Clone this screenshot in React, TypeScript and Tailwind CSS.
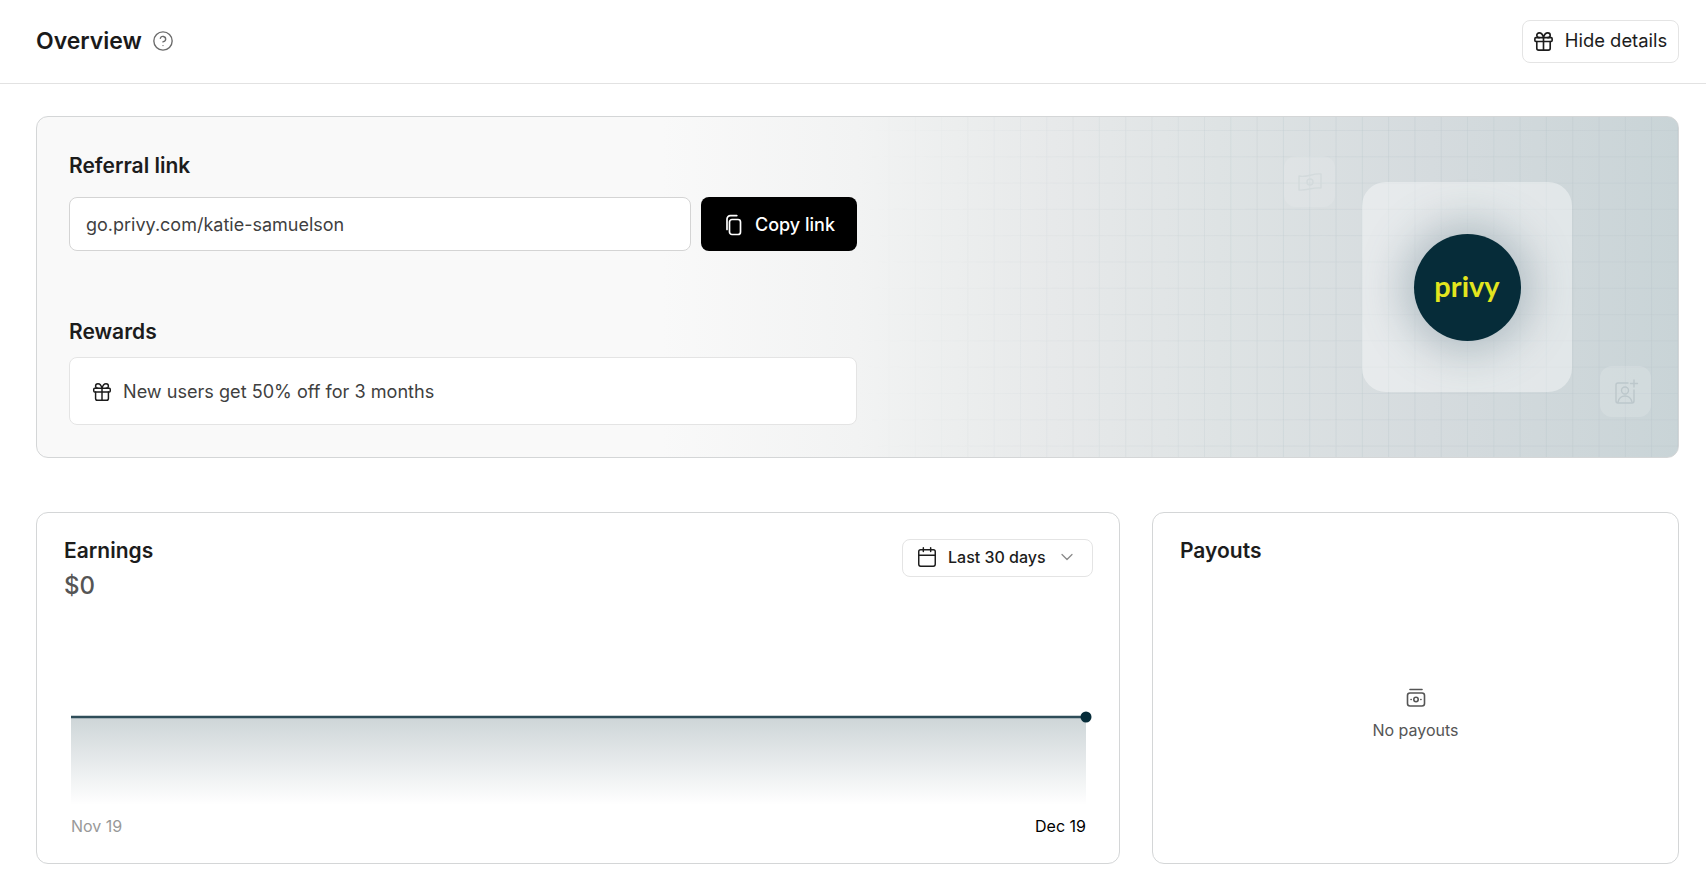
import { Calendar, ChevronDown, CircleHelp, Gift } from 'lucide-react'

function CopyIcon() {
  return (
    <svg width="22" height="22" viewBox="0 0 22 22" fill="none" stroke="currentColor" strokeWidth="1.7" strokeLinecap="round" strokeLinejoin="round">
      <rect x="6.5" y="5.5" width="11" height="15" rx="2.5" />
      <path d="M4 15.5V5a3.4 3.4 0 0 1 3.4-3.4h6.4" />
    </svg>
  )
}

function CashIcon() {
  return (
    <svg width="22" height="22" viewBox="0 0 22 22" fill="none" stroke="currentColor" strokeWidth="1.6" strokeLinecap="round">
      <path d="M5 2.5h12" />
      <rect x="2.5" y="6" width="17" height="13" rx="2.5" />
      <circle cx="11" cy="12.5" r="2.2" />
      <path d="M6 12.5h.2M15.8 12.5h.2" />
    </svg>
  )
}

function FlagCashIcon() {
  return (
    <svg width="26" height="22" viewBox="0 0 26 22" fill="none" stroke="currentColor" strokeWidth="1.4" strokeLinejoin="round">
      <path d="M2 5c7 2 14-3 22-2v14c-8-1-15 3-22 2z" />
      <circle cx="13" cy="11" r="3" />
    </svg>
  )
}

function AddUserIcon() {
  return (
    <svg width="26" height="26" viewBox="0 0 26 26" fill="none" stroke="currentColor" strokeWidth="1.4" strokeLinecap="round">
      <path d="M15 4H5a2 2 0 0 0-2 2v16a2 2 0 0 0 2 2h14a2 2 0 0 0 2-2V11" />
      <circle cx="12" cy="11.5" r="3.5" />
      <path d="M5 23c1-4 4-6 7-6s6 2 7 6M21 1v7M17.5 4.5h7" />
    </svg>
  )
}

function Banner() {
  return (
    <section className="relative h-[342px] overflow-hidden rounded-xl border border-[#d4d6d7] bg-[linear-gradient(90deg,#f9f9f9_0%,#f9f9f9_38%,#f2f3f3_50%,#eceeee_56%,#e7e9ea_62%,#dee3e4_72%,#d5dbde_85%,#c9d4d7_100%)] px-8 pt-[32px]">
      <div className="absolute inset-0 bg-[linear-gradient(#b9c6cb44_1px,transparent_1px),linear-gradient(90deg,#b9c6cb55_1px,transparent_1px)] bg-[size:26.3px_26.3px] bg-[position:10px_13px] [mask-image:linear-gradient(90deg,transparent_50%,black_80%)]" />

      <div className="relative flex w-[788px] flex-col">
        <h2 className="text-[21px] leading-[34px] font-semibold text-[#1c1c1c]">Referral link</h2>
        <div className="mt-[14px] flex gap-[10px]">
          <div className="flex h-[54px] flex-1 items-center rounded-lg border border-[#d4d4d4] bg-white pt-[2px] pl-4 text-lg text-[#3f3f3f]">
            go.privy.com/katie-samuelson
          </div>
          <button className="flex h-[54px] w-[156px] items-center justify-center gap-[10px] rounded-lg bg-black pt-[1px] text-lg font-medium text-white">
            <CopyIcon />
            Copy link
          </button>
        </div>
        <h2 className="mt-[64px] text-[21px] leading-[34px] font-semibold text-[#1c1c1c]">Rewards</h2>
        <div className="mt-[8px] flex h-[68px] items-center gap-[10px] rounded-lg border border-[#e4e4e4] bg-white pt-[1px] pl-[21px] text-[18.1px] text-[#3f3f3f]">
          <Gift size={22} strokeWidth={1.6} className="text-[#1c1c1c]" />
          New users get 50% off for 3 months
        </div>
      </div>

      {/* floating tiles */}
      <div className="absolute top-[39px] left-[1247px] flex h-[51px] w-[51px] items-center justify-center rounded-xl bg-white/10 text-[#d3dadc]">
        <FlagCashIcon />
      </div>
      <div className="absolute top-[249px] left-[1563px] flex h-[51px] w-[51px] items-center justify-center rounded-xl bg-white/15 text-[#bcc7cb]">
        <AddUserIcon />
      </div>
      <div className="absolute top-[65px] left-[1325px] flex h-[210px] w-[210px] items-center justify-center rounded-[24px] bg-white/40">
        <div className="flex h-[107px] w-[107px] items-center justify-center rounded-full bg-[#062c39] pb-[3px] shadow-[0_0_40px_12px_rgba(90,115,130,0.35)]">
          <span className="font-['Lato',sans-serif] text-[29px] leading-none font-bold text-[#e3e51e]">privy</span>
        </div>
      </div>
    </section>
  )
}

function Earnings() {
  return (
    <section className="flex h-[352px] flex-col rounded-xl border border-[#d4d6d7] bg-white pt-[26px] pr-[26px] pl-[27px]">
      <div className="flex items-start justify-between">
        <div className="-mt-[1px]">
          <h2 className="text-[21px] leading-[26px] font-semibold text-[#1c1c1c]">Earnings</h2>
          <p className="mt-[9px] text-2xl leading-[26px] font-medium text-[#555]">$0</p>
        </div>
        <button className="flex h-[38px] w-[191px] items-center rounded-lg border border-[#e4e4e4] bg-white pb-[2px] pl-[13px] text-base font-medium text-[#1c1c1c]">
          <Calendar size={22} strokeWidth={1.6} />
          <span className="ml-[10px]">Last 30 days</span>
          <ChevronDown size={20} strokeWidth={1.5} className="ml-[11px] text-[#8a8a8a]" />
        </button>
      </div>

      <div className="mt-[112px] pl-[7px]">
        <svg className="block" width="1021" height="94" viewBox="0 0 1021 94" fill="none">
          <defs>
            <linearGradient id="area" x1="0" y1="0" x2="0" y2="1">
              <stop offset="0" stopColor="#062c39" stopOpacity="0.2" />
              <stop offset="1" stopColor="#062c39" stopOpacity="0" />
            </linearGradient>
          </defs>
          <rect x="0" y="6" width="1015" height="88" fill="url(#area)" />
          <path d="M0 6H1015" stroke="#2f4d59" strokeWidth="2.5" />
          <circle cx="1015" cy="6" r="5.5" fill="#062c39" />
        </svg>
      </div>
      <div className="mt-[9px] flex w-[1022px] justify-between pl-[7px] text-base leading-6">
        <span className="text-[#999]">Nov 19</span>
        <span className="text-black">Dec 19</span>
      </div>
    </section>
  )
}

function Payouts() {
  return (
    <section className="flex h-[352px] flex-col rounded-xl border border-[#d4d6d7] bg-white pt-[25px] pl-[27px]">
      <h2 className="text-[21px] leading-[26px] font-semibold text-[#1c1c1c]">Payouts</h2>
      <div className="mt-[123px] mr-[27px] flex flex-col items-center gap-[9px] text-[#555]">
        <CashIcon />
        <span className="text-base leading-6">No payouts</span>
      </div>
    </section>
  )
}

export default function App() {
  return (
    <div className="min-h-[888px] bg-white font-['Inter',sans-serif]">
      <header className="flex h-[84px] items-center justify-between border-b border-[#e2e2e2] pr-[27px] pl-9">
        <div className="flex items-center gap-[10px]">
          <h1 className="text-[23px] font-semibold text-[#1a1a1a]">Overview</h1>
          <CircleHelp size={22} strokeWidth={1.5} className="-mt-[1px] text-[#6b6b6b]" />
        </div>
        <button className="-mt-[1px] flex h-[43px] w-[157px] items-center justify-center gap-[10px] rounded-lg border border-[#e4e4e4] bg-white pr-[2px] text-[18.4px] text-[#1c1c1c]">
          <Gift size={23} strokeWidth={1.7} />
          Hide details
        </button>
      </header>

      <main className="flex flex-col gap-[54px] pt-[32px] pr-[27px] pl-9">
        <Banner />
        <div className="grid grid-cols-[1084px_527px] gap-8">
          <Earnings />
          <Payouts />
        </div>
      </main>
    </div>
  )
}
